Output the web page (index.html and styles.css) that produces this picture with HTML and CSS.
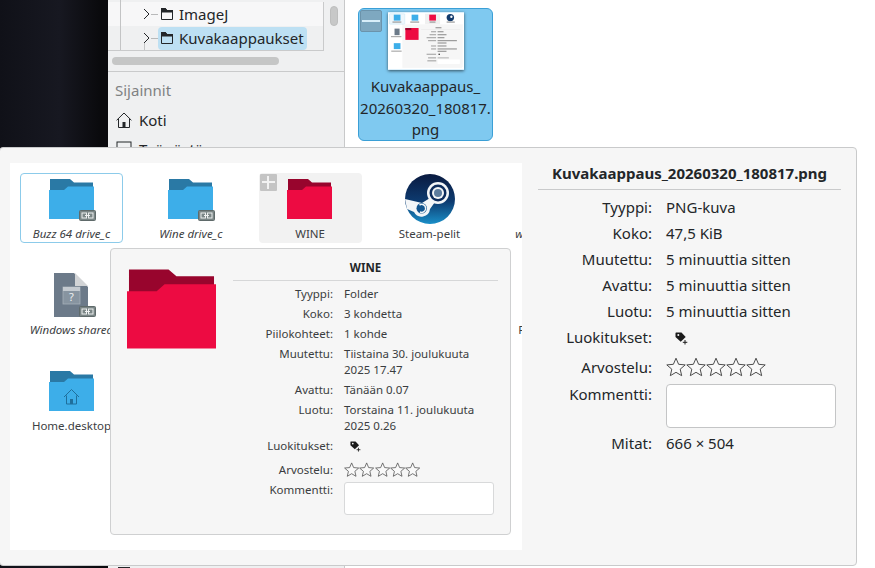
FILE: index.html
```html
<!DOCTYPE html>
<html lang="fi">
<head>
<meta charset="utf-8">
<title>Kuvakaappaus</title>
<link rel="stylesheet" href="styles.css">
</head>
<body>
<svg class="defs" width="0" height="0" aria-hidden="true">
  <defs>
    <linearGradient id="steamgrad" x1="0" y1="0" x2="0" y2="1">
      <stop offset="0" stop-color="#0a1a40"/><stop offset="0.55" stop-color="#0d3b70"/><stop offset="1" stop-color="#1a8fc8"/>
    </linearGradient>
    <symbol id="badge" viewBox="0 0 17 11">
      <rect x="0.5" y="0.5" width="16" height="10" rx="1" fill="#7b8686" stroke="#5f6a6a"/>
      <rect x="3" y="3" width="4.5" height="5" fill="none" stroke="#eef0f0"/>
      <rect x="9.5" y="3" width="4.5" height="5" fill="none" stroke="#eef0f0"/>
      <path d="M6 5.500h5" stroke="#eef0f0"/>
    </symbol>
    <symbol id="star" viewBox="0 0 20 20">
      <path d="M10 1.200l2.600 6.100 6.600.6-5 4.300 1.500 6.500L10 15.300l-5.700 3.400 1.500-6.500-5-4.300 6.600-.6z" fill="#fbfbfb" fill-opacity=".5" stroke="#4d4d4d" stroke-width="1"/>
    </symbol>
    <symbol id="tag" viewBox="0 0 13 13">
      <path d="M1 0.500h5.500l4.200 4.400-5 4.800L.5 5V1z" fill="#1b1b1b"/>
      <circle cx="3.300" cy="3" r="1" fill="#f6f6f6"/>
      <path d="M10 8v4.500M7.800 10.300h4.500" stroke="#1b1b1b" stroke-width="1"/>
    </symbol>
    <symbol id="treefolder" viewBox="0 0 12 12">
      <path d="M.5 11.500V.5h4l1.500 2h5.500v9z" fill="none" stroke="#232629"/>
      <path d="M0 0h4.500L6 2h6v2.500H0z" fill="#232629"/>
    </symbol>
  </defs>
</svg>

<div class="desk">
  <div class="wallpaper"></div>

  <aside class="sidebar">
    <div class="tree-wrap">
      <div class="tree">
        <i class="guide guide-a"></i>
        <i class="guide guide-b"></i>
        <div class="tree-row tree-row-light">
          <svg class="chev" viewBox="0 0 7 12"><path d="M1 1l5 5-5 5" fill="none" stroke="#232629"/></svg>
          <i class="dash"></i>
          <svg class="tree-icon"><use href="#treefolder"/></svg>
          <span class="tree-label">ImageJ</span>
        </div>
        <div class="tree-row">
          <svg class="chev" viewBox="0 0 7 12"><path d="M1 1l5 5-5 5" fill="none" stroke="#232629"/></svg>
          <i class="dash"></i>
          <div class="tree-pill">
            <svg class="tree-icon"><use href="#treefolder"/></svg>
            <span class="tree-label">Kuvakaappaukset</span>
          </div>
        </div>
      </div>
      <div class="vscroll"><i class="vthumb"></i></div>
    </div>
    <div class="hscroll"></div>
    <div class="places">
      <div class="places-title">Sijainnit</div>
      <div class="place">
        <svg class="place-icon" viewBox="0 0 16 16"><path d="M.6 8.300L8 1l7.400 7.300M2.500 7v8.500h11V7" fill="none" stroke="#232629"/><rect x="6.500" y="10" width="3" height="5.500" fill="#232629"/></svg>
        <span>Koti</span>
      </div>
      <div class="place">
        <svg class="place-icon" viewBox="0 0 16 16"><rect x="1" y="1" width="14" height="11" fill="none" stroke="#232629"/></svg>
        <span>Työpöytä</span>
      </div>
      <div class="place place-last"><i class="place-block"></i></div>
    </div>
  </aside>

  <main class="content">
    <div class="tile">
      <div class="tile-btn"><i class="tile-minus"></i></div>
      <svg class="thumb" viewBox="0 0 512 387">
        <rect width="512" height="387" fill="#fff"/>
        <rect x="10" y="10" width="103" height="70" rx="4" fill="#eef7fc" stroke="#a8d8f0" stroke-width="2"/>
        <rect x="39" y="16" width="45" height="40" fill="#3daee9"/>
        <rect x="159" y="16" width="45" height="40" fill="#3daee9"/>
        <rect x="249" y="10" width="102" height="70" fill="#f0f0f0"/>
        <rect x="278" y="16" width="45" height="40" fill="#ed0b42"/>
        <circle cx="420" cy="36" r="25" fill="#123a6c"/><circle cx="427" cy="30" r="8" fill="#fff"/>
        <rect x="30" y="62" width="60" height="8" fill="#999"/><rect x="150" y="62" width="60" height="8" fill="#999"/><rect x="280" y="62" width="40" height="8" fill="#999"/><rect x="395" y="62" width="55" height="8" fill="#999"/>
        <rect x="44" y="110" width="34" height="44" fill="#6c7a89"/><rect x="20" y="160" width="70" height="8" fill="#aaa"/>
        <rect x="39" y="208" width="45" height="40" fill="#3daee9"/><rect x="22" y="258" width="70" height="8" fill="#aaa"/>
        <rect x="100" y="85" width="400" height="286" fill="#f6f6f6" stroke="#ddd"/>
        <rect x="117" y="106" width="89" height="80" fill="#ed0b42"/><rect x="117" y="106" width="40" height="14" fill="#98052d"/>
        <rect x="320" y="100" width="40" height="8" fill="#999"/><rect x="223" y="117" width="265" height="2" fill="#ddd"/>
        <rect x="290" y="127" width="34" height="8" fill="#aaa"/><rect x="334" y="127" width="40" height="8" fill="#999"/>
        <rect x="280" y="147" width="44" height="8" fill="#aaa"/><rect x="334" y="147" width="60" height="8" fill="#999"/>
        <rect x="260" y="167" width="64" height="8" fill="#aaa"/><rect x="334" y="167" width="46" height="8" fill="#999"/>
        <rect x="270" y="187" width="54" height="8" fill="#aaa"/><rect x="334" y="187" width="130" height="8" fill="#999"/><rect x="334" y="203" width="60" height="8" fill="#999"/>
        <rect x="290" y="223" width="34" height="8" fill="#aaa"/><rect x="334" y="223" width="60" height="8" fill="#999"/>
        <rect x="290" y="243" width="34" height="8" fill="#aaa"/><rect x="334" y="243" width="130" height="8" fill="#999"/><rect x="334" y="259" width="60" height="8" fill="#999"/>
        <rect x="260" y="279" width="64" height="8" fill="#aaa"/><rect x="340" y="279" width="10" height="8" fill="#333"/>
        <rect x="270" y="303" width="54" height="8" fill="#aaa"/><rect x="334" y="303" width="76" height="8" fill="#bbb"/>
        <rect x="265" y="323" width="60" height="8" fill="#aaa"/><rect x="334" y="318" width="150" height="30" fill="#fff"/>
      </svg>
      <div class="tile-label">Kuvakaappaus_<br>20260320_180817.<br>png</div>
    </div>
  </main>
</div>

<section class="panel">
  <div class="shot">
    <div class="grid">
      <div class="item item-focus">
        <svg class="icon" viewBox="0 0 50 44">
          <path d="M3 0H23L27 3.500H46V12H3z" fill="#2a79a5"/><path d="M2 11H17L21 7.500H47V40H2z" fill="#3daee9"/>
          <use href="#badge" x="32" y="31" width="17" height="11"/>
        </svg>
        <div class="item-name item-link">Buzz 64 drive_c</div>
      </div>
      <div class="item">
        <svg class="icon" viewBox="0 0 50 44">
          <path d="M3 0H23L27 3.500H46V12H3z" fill="#2a79a5"/><path d="M2 11H17L21 7.500H47V40H2z" fill="#3daee9"/>
          <use href="#badge" x="32" y="31" width="17" height="11"/>
        </svg>
        <div class="item-name item-link">Wine drive_c</div>
      </div>
      <div class="item item-hover">
        <div class="plus-btn"><i class="plus-h"></i><i class="plus-v"></i></div>
        <svg class="icon" viewBox="0 0 50 44">
          <path d="M3 0H23L27 3.500H46V12H3z" fill="#98052d"/><path d="M2 11H17L21 7.500H47V40H2z" fill="#ed0b42"/>
        </svg>
        <div class="item-name">WINE</div>
      </div>
      <div class="item">
        <svg class="icon" viewBox="0 0 50 44">
          <g transform="translate(1 0)">
            <circle cx="25" cy="20" r="25" fill="url(#steamgrad)"/>
            <path d="M0 20L17 24L25 19L30 23L25 30A8.500 8.500 0 0 1 9 33L2 30z" fill="#f4f6f8"/>
            <circle cx="33" cy="14" r="11" fill="#f4f6f8"/>
            <circle cx="33" cy="14" r="8.500" fill="#0d2c5c"/>
            <circle cx="33" cy="14" r="6" fill="#f4f6f8"/>
            <circle cx="33" cy="14" r="4" fill="#5d7c9d"/>
            <circle cx="16.700" cy="29.300" r="5.200" fill="#12558f"/>
            <path d="M14.500 26a4 4 0 1 1 .5 7" fill="none" stroke="#f4f6f8" stroke-width="1.500"/>
          </g>
        </svg>
        <div class="item-name">Steam-pelit</div>
      </div>
      <div class="item">
        <div class="item-off item-off-a">wine</div>
      </div>
      <div class="item">
        <svg class="icon" viewBox="0 0 50 44">
          <path d="M7 -2H27L41 12V42H7z" fill="#6c7a89"/><path d="M28 -2L41 11H28z" fill="#d2d4d6"/>
          <rect x="16" y="12" width="17" height="17" fill="#8794a0" stroke="#a6b0b8" stroke-width=".8"/><rect x="16" y="12" width="17" height="4" fill="#c4cad0"/>
          <text x="24.500" y="26" class="qmark">?</text>
          <use href="#badge" x="32" y="31" width="17" height="11"/>
        </svg>
        <div class="item-name item-link">Windows shared</div>
      </div>
      <div class="item"></div><div class="item"></div><div class="item"></div>
      <div class="item"><div class="item-off item-off-b">Fotot</div></div>
      <div class="item">
        <svg class="icon" viewBox="0 0 50 44">
          <path d="M3 0H23L27 3.500H46V12H3z" fill="#2a79a5"/><path d="M2 11H17L21 7.500H47V40H2z" fill="#3daee9"/>
          <path d="M17 26l7.500-7.500 7.500 7.500M19.500 24.500V33H29.500V24.500" fill="none" stroke="#1f6f9c"/><rect x="23" y="28" width="3" height="5" fill="#1f6f9c"/>
        </svg>
        <div class="item-name">Home.desktop</div>
      </div>
    </div>

    <div class="wine">
      <svg class="wine-icon" viewBox="0 0 45 40">
        <path d="M1 0H21L25 3.500H44V12H1z" fill="#98052d"/><path d="M0 11H15L19 7.500H45V40H0z" fill="#ed0b42"/>
      </svg>
      <div class="wine-info">
        <h2 class="wine-title">WINE</h2>
        <dl class="wine-list">
          <dt>Tyyppi:</dt><dd>Folder</dd>
          <dt>Koko:</dt><dd>3 kohdetta</dd>
          <dt>Piilokohteet:</dt><dd>1 kohde</dd>
          <dt>Muutettu:</dt><dd class="wine-two">Tiistaina 30. joulukuuta<br>2025 17.47</dd>
          <dt>Avattu:</dt><dd>Tänään 0.07</dd>
          <dt>Luotu:</dt><dd class="wine-two">Torstaina 11. joulukuuta<br>2025 0.26</dd>
          <dt>Luokitukset:</dt><dd><svg class="wine-tag"><use href="#tag"/></svg></dd>
          <dt class="wine-stars-label">Arvostelu:</dt>
          <dd class="wine-stars">
            <svg class="wine-star"><use href="#star"/></svg><svg class="wine-star"><use href="#star"/></svg><svg class="wine-star"><use href="#star"/></svg><svg class="wine-star"><use href="#star"/></svg><svg class="wine-star"><use href="#star"/></svg>
          </dd>
          <dt class="wine-comment-label">Kommentti:</dt><dd class="wine-comment-cell"><div class="wine-comment"></div></dd>
        </dl>
      </div>
    </div>
  </div>

  <div class="meta">
    <h1 class="meta-title">Kuvakaappaus_20260320_180817.png</h1>
    <dl class="meta-list">
      <dt>Tyyppi:</dt><dd>PNG-kuva</dd>
      <dt>Koko:</dt><dd>47,5 KiB</dd>
      <dt>Muutettu:</dt><dd>5 minuuttia sitten</dd>
      <dt>Avattu:</dt><dd>5 minuuttia sitten</dd>
      <dt>Luotu:</dt><dd>5 minuuttia sitten</dd>
      <dt class="meta-tags-cell">Luokitukset:</dt><dd class="meta-tags-cell"><svg class="meta-tag"><use href="#tag"/></svg></dd>
      <dt class="meta-stars-label">Arvostelu:</dt>
      <dd class="meta-stars">
        <svg class="meta-star"><use href="#star"/></svg><svg class="meta-star"><use href="#star"/></svg><svg class="meta-star"><use href="#star"/></svg><svg class="meta-star"><use href="#star"/></svg><svg class="meta-star"><use href="#star"/></svg>
      </dd>
      <dt class="meta-comment-label">Kommentti:</dt><dd class="meta-comment-cell"><div class="meta-comment"></div></dd>
      <dt class="meta-last">Mitat:</dt><dd class="meta-last">666 × 504</dd>
    </dl>
  </div>
</section>
</body>
</html>
```
FILE: styles.css
```css
* { box-sizing: border-box; }
html, body { margin: 0; padding: 0; }
body {
  width: 875px;
  height: 568px;
  overflow: hidden;
  position: relative;
  background: #fff;
  color: #232629;
  font-family: "Noto Sans", sans-serif;
}
.defs { position: absolute; }
dl, dd, dt, h1, h2 { margin: 0; font-weight: normal; }

.desk { display: flex; height: 568px; }
.wallpaper {
  width: 108px;
  flex: none;
  background: linear-gradient(to right, #101118, #171821 55%, #0a0a0d 92%);
}

/* file manager */
.sidebar {
  width: 237px;
  flex: none;
  background: #eff0f1;
  border-right: 1px solid #c8c9ca;
  padding-top: 2px;
  font-size: 15px;
  overflow: hidden;
}
.tree-wrap { display: flex; height: 49px; }
.tree {
  position: relative;
  width: 216px;
  flex: none;
  border-right: 1px solid #c9cacb;
  border-bottom: 1px solid #c9cacb;
}
.guide { position: absolute; width: 1px; background: #c3c4c5; }
.guide-a { left: 12px; top: -2px; bottom: 0; }
.guide-b { left: 36px; top: 41px; bottom: 0; }
.tree-row {
  display: flex;
  align-items: center;
  height: 24px;
  padding-left: 35px;
}
.tree-row-light { background: #f7f7f8; }
.chev { width: 7px; height: 12px; flex: none; }
.dash { width: 7px; height: 1px; margin: 0 3px 0 1px; background: #b8b9ba; flex: none; }
.tree-icon { width: 12px; height: 12px; flex: none; }
.tree-label { margin-left: 6px; white-space: nowrap; }
.tree-pill {
  display: flex;
  flex: none;
  align-items: center;
  margin-left: -3px;
  padding-left: 3px;
  width: 149px;
  height: 23px;
  background: #bde0f3;
  border-radius: 4px;
}
.vscroll { padding: 4px 0 0 6px; }
.vthumb {
  display: block;
  width: 8px;
  height: 20px;
  border-radius: 4px;
  background: #c7c8c8;
  border: 1px solid #bdbebe;
}
.hscroll {
  width: 167px;
  height: 8px;
  margin: 6px 0 0 4px;
  border-radius: 4px;
  background: #c5c6c6;
}
.places {
  margin-top: 6px;
  border-top: 1px solid #c9cacb;
  padding: 8px 0 0 7px;
}
.places-title { height: 25px; line-height: 20px; color: #7f8283; }
.place { display: flex; align-items: center; height: 29px; white-space: nowrap; }
.place-icon { width: 16px; height: 16px; flex: none; margin: 0 7px 0 1px; }
.place-last { margin-top: 395px; }
.place-block { display: block; width: 12px; height: 12px; margin-left: 3px; background: #232629; }

.content { flex: 1; padding: 8px 0 0 13px; background: #fff; }
.tile {
  position: relative;
  width: 135px;
  height: 133px;
  padding-top: 3px;
  background: #7fc9f0;
  border: 1px solid #3a9fd6;
  border-radius: 6px;
  text-align: center;
}
.tile-btn {
  position: absolute;
  left: 1px;
  top: 1px;
  width: 22px;
  height: 22px;
  display: flex;
  align-items: center;
  justify-content: center;
  background: #7ea8c0;
  border: 1px solid #6b93ab;
  border-radius: 2px;
}
.tile-minus { display: block; width: 18px; height: 2px; background: #d8eef9; }
.thumb {
  display: block;
  width: 76px;
  height: 58px;
  margin-left: 29px;
  box-shadow: 0 1px 3px rgba(0, 0, 0, .6);
  filter: blur(.4px);
}
.tile-label {
  margin-top: 6px;
  font-size: 15px;
  line-height: 21.5px;
  white-space: nowrap;
}

/* tooltip panel */
.panel {
  position: absolute;
  left: -1px;
  top: 147px;
  width: 858px;
  height: 419px;
  display: flex;
  align-items: flex-start;
  padding: 15px 0 0 10px;
  background: #f6f6f6;
  border: 1px solid #c9cacb;
  border-radius: 4px;
}
.shot {
  position: relative;
  width: 512px;
  height: 387px;
  flex: none;
  background: #fff;
  overflow: hidden;
}
.grid {
  display: grid;
  grid-template-columns: repeat(5, 103px);
  grid-auto-rows: 70px;
  column-gap: 16.33px;
  row-gap: 26px;
  padding: 10px 0 0 10px;
}
.item {
  position: relative;
  height: 70px;
  padding-top: 6px;
  border: 1px solid transparent;
  border-radius: 4px;
  text-align: center;
  font-size: 11.5px;
}
.item-focus { border-color: #8ccbea; }
.item-hover { background: #f2f2f2; }
.icon { display: block; width: 50px; height: 44px; margin: -1px auto 0; overflow: visible; }
.item-name {
  position: absolute;
  left: -10px;
  right: -10px;
  top: 52px;
  line-height: 16px;
  white-space: nowrap;
  color: #3c4043;
}
.item-link { font-style: italic; }
.item-off {
  position: absolute;
  top: 52px;
  line-height: 16px;
  white-space: nowrap;
  color: #3c4043;
}
.item-off-a { left: 17px; font-style: italic; }
.item-off-b { left: 20px; }
.plus-btn {
  position: absolute;
  left: 0;
  top: 0;
  width: 17px;
  height: 17px;
  background: #c4c4c4;
  border-radius: 1px;
}
.plus-h { position: absolute; left: 2px; right: 2px; top: 7px; height: 2px; background: #f2f2f2; }
.plus-v { position: absolute; top: 2px; bottom: 2px; left: 7px; width: 2px; background: #f2f2f2; }
.qmark { font-size: 11px; fill: #eef0f2; text-anchor: middle; font-family: "Noto Sans", sans-serif; }

.wine {
  position: absolute;
  left: 100px;
  top: 85px;
  width: 401px;
  height: 287px;
  display: flex;
  background: #f6f6f6;
  border: 1px solid #cfd0d1;
  border-radius: 4px;
  font-size: 11.5px;
  color: #3a3d40;
}
.wine-icon { width: 89px; height: 80px; flex: none; margin: 20px 0 0 16px; }
.wine-info { width: 265px; margin: 10px 0 0 17px; flex: none; }
.wine-title {
  height: 22px;
  line-height: 18px;
  text-align: center;
  font-size: 11.5px;
  font-weight: 700;
  color: #232629;
  border-bottom: 1px solid #d6d7d8;
}
.wine-list {
  display: grid;
  grid-template-columns: 100px 154px;
  column-gap: 11px;
  margin-top: 3px;
  line-height: 20px;
}
.wine-list dt { text-align: right; white-space: nowrap; }
.wine-two { line-height: 16px; padding: 2px 0; }
.wine-tag { display: block; width: 11px; height: 11px; margin: 5px 0 0 6px; }
.wine-stars-label { margin-top: 4px; }
.wine-stars { display: flex; height: 21px; margin-top: 3px; align-items: center; }
.wine-star { width: 15.300px; height: 15.300px; flex: none; }
.wine-comment-label { margin-top: 2px; line-height: 16px; }
.wine-comment-cell { margin-top: 2px; }
.wine-comment {
  width: 150px;
  height: 33px;
  background: #fff;
  border: 1px solid #d8d9da;
  border-radius: 3px;
}

.meta { width: 303px; margin-left: 16px; flex: none; font-size: 15px; }
.meta-title {
  height: 27px;
  line-height: 20px;
  text-align: center;
  font-size: 15px;
  font-weight: 700;
  white-space: nowrap;
  border-bottom: 1px solid #c9cacb;
}
.meta-list {
  display: grid;
  grid-template-columns: 114px 175px;
  column-gap: 14px;
  margin-top: 4px;
  line-height: 26px;
}
.meta-list dt { text-align: right; white-space: nowrap; }
.meta-tags-cell { height: 27px; }
.meta-tag { display: block; width: 13px; height: 13px; margin: 8px 0 0 9px; }
.meta-stars-label { margin-top: 5px; line-height: 22px; }
.meta-stars { display: flex; height: 22px; margin-top: 5px; align-items: center; }
.meta-star { width: 20px; height: 20px; flex: none; }
.meta-comment-label { margin-top: 5px; line-height: 22px; }
.meta-comment-cell { margin-top: 6px; }
.meta-comment {
  width: 170px;
  height: 44px;
  background: #fff;
  border: 1px solid #c4c5c6;
  border-radius: 4px;
}
.meta-last { margin-top: 2px; }
```
